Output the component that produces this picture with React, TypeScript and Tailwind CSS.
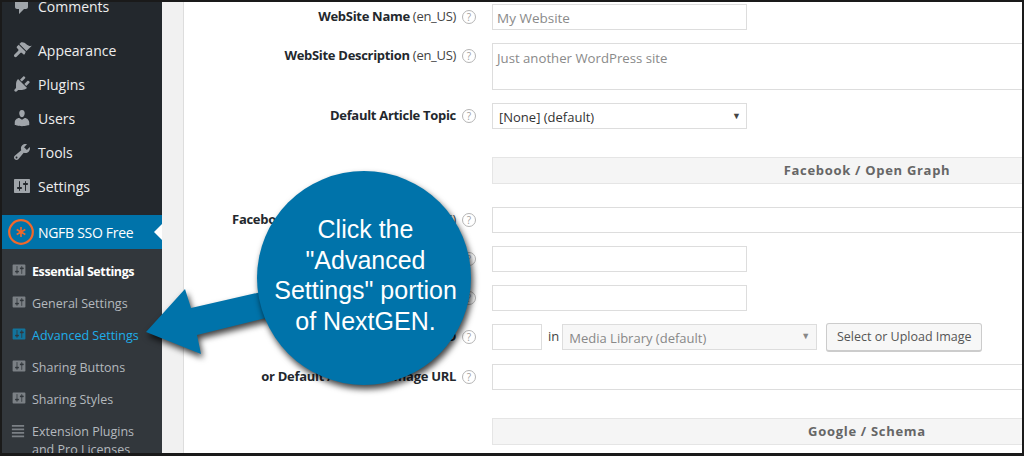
import React from 'react';

const FONT = "font-['Open_Sans','Noto_Sans',sans-serif]";

// wp admin menu glyphs
const PATHS = {
  comments: 'M5 2h9c1.1 0 2 .9 2 2v7c0 1.1-.9 2-2 2h-2l-5 5v-5H5c-1.1 0-2-.9-2-2V4c0-1.1.9-2 2-2z',
  appearance:
    'M14.48 11.06L7.41 3.99l1.5-1.5c.5-.56 2.3-.47 3.51.32 1.21.8 1.43 1.28 2.91 2.1 1.18.64 2.45 1.26 4.45.85zm-.71.71L6.7 4.7 4.93 6.47c-.39.39-.39 1.02 0 1.41l1.06 1.06c.59.59.59 1.54 0 2.12l-3.53 3.54c-.59.59-.59 1.54 0 2.12.59.59 1.54.59 2.12 0l3.53-3.54c.59-.59 1.54-.59 2.12 0l1.06 1.06c.39.39 1.02.39 1.41 0z',
  plugins:
    'M13.11 4.36L9.87 7.6 8 5.73l3.24-3.24c.35-.34 1.05-.2 1.56.32.52.51.66 1.21.31 1.55zm-8 1.77l.91-1.12 9.01 9.01-1.19.84c-.71.71-2.63 1.16-3.82 1.16H6.14L4.9 17.26c-.59.59-1.54.59-2.12 0-.59-.58-.59-1.53 0-2.12l1.24-1.24v-3.88c0-1.13.4-3.19 1.09-3.89zm7.26 3.97l3.24-3.24c.34-.35 1.04-.21 1.55.31.52.51.66 1.21.31 1.55l-3.24 3.25z',
  users:
    'M10 9.25c-2.27 0-2.73-3.44-2.73-3.44C7 4.02 7.82 2 9.97 2c2.16 0 2.98 2.02 2.71 3.81 0 0-.41 3.44-2.68 3.44zm0 2.57L12.72 10c2.39 0 4.52 2.33 4.52 4.53v2.49s-3.65 1.13-7.24 1.13c-3.65 0-7.24-1.13-7.24-1.13v-2.49c0-2.25 1.94-4.48 4.47-4.48z',
  tools:
    'M16.68 9.77c-1.34 1.34-3.3 1.67-4.95.99l-5.41 6.52c-.99.99-2.59.99-3.58 0s-.99-2.59 0-3.57l6.52-5.42c-.68-1.65-.35-3.61.99-4.95 1.28-1.28 3.12-1.62 4.72-1.06l-2.89 2.89 2.82 2.82 2.86-2.87c.53 1.58.18 3.39-1.08 4.65zM3.81 16.21c.4.39 1.04.39 1.43 0 .4-.4.4-1.04 0-1.43-.39-.4-1.03-.4-1.43 0-.39.39-.39 1.03 0 1.43z',
  settings:
    'M18 16V4c0-.55-.45-1-1-1H3c-.55 0-1 .45-1 1v12c0 .55.45 1 1 1h14c.55 0 1-.45 1-1zM8 11h1c.55 0 1 .45 1 1s-.45 1-1 1H8v1.5c0 .28-.22.5-.5.5s-.5-.22-.5-.5V13H6c-.55 0-1-.45-1-1s.45-1 1-1h1V5.5c0-.28.22-.5.5-.5s.5.22.5.5V11zm5-2h-1c-.55 0-1-.45-1-1s.45-1 1-1h1V5.5c0-.28.22-.5.5-.5s.5.22.5.5V7h1c.55 0 1 .45 1 1s-.45 1-1 1h-1v5.5c0 .28-.22.5-.5.5s-.5-.22-.5-.5V9z',
};

function Dash({ name, className }: { name: keyof typeof PATHS; className: string }) {
  return (
    <svg viewBox="0 0 20 20" className={className} fill="currentColor">
      <path d={PATHS[name]} />
    </svg>
  );
}

function MainItem({ name, label }: { name: keyof typeof PATHS; label: string }) {
  return (
    <div className="h-[34px] shrink-0 flex items-center pl-[10px]">
      <div className="w-[26px] flex text-[#a0a5aa]">
        <Dash name={name} className="w-[20px] h-[20px]" />
      </div>
      <span className="text-[14px] text-[#eeeeee]">{label}</span>
    </div>
  );
}

function SubItem({ label, current, active }: { label: string; current?: boolean; active?: boolean }) {
  return (
    <div className="h-[32px] flex items-center pl-[9px]">
      <Dash name="settings" className={`w-[16px] h-[16px] mr-[5px] -mt-[4px] ${active ? 'text-[#12749c]' : 'text-[#7b8085]'}`} />
      <span className={`text-[12.5px] ${current ? 'font-bold tracking-[-0.4px] text-white' : active ? 'text-[#1eaeea]' : 'text-[#b4b9be]'}`}>{label}</span>
    </div>
  );
}

function HelpIcon() {
  return (
    <span className="w-[14px] h-[14px] rounded-full border border-[#b5b5b5] flex items-center justify-center text-[10px] leading-none text-[#a0a0a0] shrink-0">
      ?
    </span>
  );
}

function Row({ label, locale, h = 'h-[26px]', mb, top, children }: { label?: string; locale?: string; h?: string; mb: string; top?: boolean; children: React.ReactNode }) {
  return (
    <div className={`flex ${h} ${mb} ${top ? 'items-start' : 'items-center'}`}>
      <div className={`w-[272px] shrink-0 text-right text-[13px] tracking-[-0.3px] font-bold text-[#23282d] whitespace-nowrap ${top ? 'mt-[3px]' : ''}`}>
        {label} {locale && <span className="font-normal text-[#444444]">{locale}</span>}
      </div>
      <div className={`w-[36px] shrink-0 pl-[6px] flex ${top ? 'mt-[6px]' : ''}`}>
        <HelpIcon />
      </div>
      {children}
    </div>
  );
}

const fieldCls = 'border border-[#dddddd] bg-white h-full flex items-center shrink-0';

function SectionHeader({ label, mb }: { label: string; mb?: string }) {
  return (
    <div className={`flex h-[27px] ${mb ?? ''}`}>
      <div className="w-[308px] shrink-0" />
      <div className="w-[750px] shrink-0 pt-[1px] bg-[#f5f5f5] border border-[#e5e5e5] flex items-center justify-center font-bold text-[13px] tracking-[0.7px] text-[#666666]">
        {label}
      </div>
    </div>
  );
}

export default function App() {
  return (
    <div className={`w-[1024px] h-[456px] overflow-hidden bg-[#1a1a1a] pt-[2px] pb-[3px] pl-[2px] pr-[2px] ${FONT}`}>
      <div className="relative h-full flex overflow-hidden">
        {/* Sidebar */}
        <aside className="w-[160px] shrink-0 bg-[#23282d] flex flex-col">
          <div className="h-[32px] shrink-0 flex items-start pl-[10px] -mt-[6px]">
            <div className="w-[26px] flex text-[#a0a5aa]">
              <Dash name="comments" className="w-[20px] h-[20px]" />
            </div>
            <span className="text-[14px] text-[#eeeeee]">Comments</span>
          </div>
          <div className="h-[5px] shrink-0" />
          <MainItem name="appearance" label="Appearance" />
          <MainItem name="plugins" label="Plugins" />
          <MainItem name="users" label="Users" />
          <MainItem name="tools" label="Tools" />
          <MainItem name="settings" label="Settings" />
          <div className="h-[12px] shrink-0" />
          {/* Current menu */}
          <div className="relative h-[34px] shrink-0 bg-[#0073aa] flex items-center pl-[6px]">
            <svg viewBox="0 0 26 26" className="w-[26px] h-[26px] shrink-0">
              <circle cx="13" cy="13" r="11.8" fill="none" stroke="#f2682a" strokeWidth="2.2" />
              <path d="M13 8v10M8.7 10.5l8.6 5M8.7 15.500l8.600-5" stroke="#f2682a" strokeWidth="1.6" />
            </svg>
            <span className="ml-[4px] text-[14px] tracking-[-0.3px] text-white">NGFB SSO Free</span>
            <div className="absolute right-0 top-[9px] w-0 h-0 border-y-[8px] border-y-transparent border-r-[8px] border-r-white" />
          </div>
          <div className="flex-1 bg-[#32373c] pt-[7px]">
            <SubItem label="Essential Settings" current />
            <SubItem label="General Settings" />
            <SubItem label="Advanced Settings" active />
            <SubItem label="Sharing Buttons" />
            <SubItem label="Sharing Styles" />
            <div className="flex pl-[9px] pt-[7px]">
              <svg viewBox="0 0 16 16" className="w-[14px] h-[14px] mr-[7px] mt-[1px] shrink-0 text-[#7b8085]">
                <path d="M1 1h14v2H1zM1 5h14v2H1zM1 9h14v2H1zM1 13h14v2H1z" fill="currentColor" />
              </svg>
              <span className="text-[12.5px] leading-[18px] text-[#b4b9be]">
                Extension Plugins
                <br />
                and Pro Licenses
              </span>
            </div>
          </div>
        </aside>

        <div className="w-[22px] shrink-0 bg-[#f1f1f1] border-r border-[#dddddd]" />

        {/* Form */}
        <main className="flex-1 bg-white pt-[2px] text-[13px] min-w-0 overflow-hidden">
          <Row label="WebSite Name" locale="(en_US)" mb="mb-[13px]">
            <div className={`${fieldCls} w-[255px] px-[4px] pt-[2px] text-[13.5px] text-[#8a8a8a]`}>My Website</div>
          </Row>
          <Row label="WebSite Description" locale="(en_US)" h="h-[47px]" mb="mb-[13px]" top>
            <div className={`${fieldCls} w-[600px] !items-start px-[4px] pt-[5px] text-[13.2px] text-[#8a8a8a]`}>Just another WordPress site</div>
          </Row>
          <Row label="Default Article Topic" mb="mb-[28px]">
            <div className={`${fieldCls} w-[255px] pl-[6px] pr-[7px] pt-[3px] justify-between text-[#333333]`}>
              <span>[None] (default)</span>
              <span className="text-[9px] text-[#444444] -mr-[2px] -mt-[3px]">▼</span>
            </div>
          </Row>
          <SectionHeader label="Facebook / Open Graph" mb="mb-[23px]" />
          <Row label="Facebook Business Page URL" locale="(en_US)" mb="mb-[13px]">
            <div className={`${fieldCls} w-[600px]`} />
          </Row>
          <Row mb="mb-[13px]">
            <div className={`${fieldCls} w-[255px]`} />
          </Row>
          <Row mb="mb-[13px]">
            <div className={`${fieldCls} w-[255px]`} />
          </Row>
          <Row label="Default / Fallback Image ID" mb="mb-[14px]">
            <div className={`${fieldCls} w-[50px]`} />
            <span className="ml-[6px] mr-[3px] -mt-[1px] text-[#444444]">in</span>
            <div className={`${fieldCls} w-[255px] !bg-[#f7f7f7] pl-[6px] pr-[6px] pt-[3px] justify-between text-[#888888]`}>
              <span>Media Library (default)</span>
              <span className="text-[9px] text-[#888888] -mt-[5px]">▼</span>
            </div>
            <div className="ml-[9px] h-[29px] mt-[1px] w-[156px] shrink-0 bg-[#f7f7f7] border border-[#cccccc] border-b-[2px] rounded-[3px] flex items-center justify-center text-[12.5px] text-[#555555]">
              Select or Upload Image
            </div>
          </Row>
          <Row label="or Default / Fallback Image URL" mb="mb-[28px]">
            <div className={`${fieldCls} w-[600px]`} />
          </Row>
          <SectionHeader label="Google / Schema" />
        </main>

        {/* Callout overlay */}
        <svg viewBox="0 0 130 100" className="absolute left-[143px] top-[266px] w-[130px] h-[100px] drop-shadow-[2px_4px_3px_rgba(0,0,0,0.75)]">
          <path d="M1 64 L40 21 L46 40 L125 22 L125 49 L52 67 L56 86 Z" fill="#0073aa" />
        </svg>
        <div className="absolute left-[255px] top-[169px] w-[214px] h-[214px] rounded-full bg-[#0073aa] shadow-[2px_4px_6px_rgba(0,0,0,0.75)] flex items-center justify-center text-center font-['Liberation_Sans',Arial,sans-serif] text-[25px] leading-[30.5px] text-white">
          <div className="pl-[3px] -mt-[6px]">
            Click the
            <br />
            "Advanced
            <br />
            Settings" portion
            <br />
            of NextGEN.
          </div>
        </div>
      </div>
    </div>
  );
}
